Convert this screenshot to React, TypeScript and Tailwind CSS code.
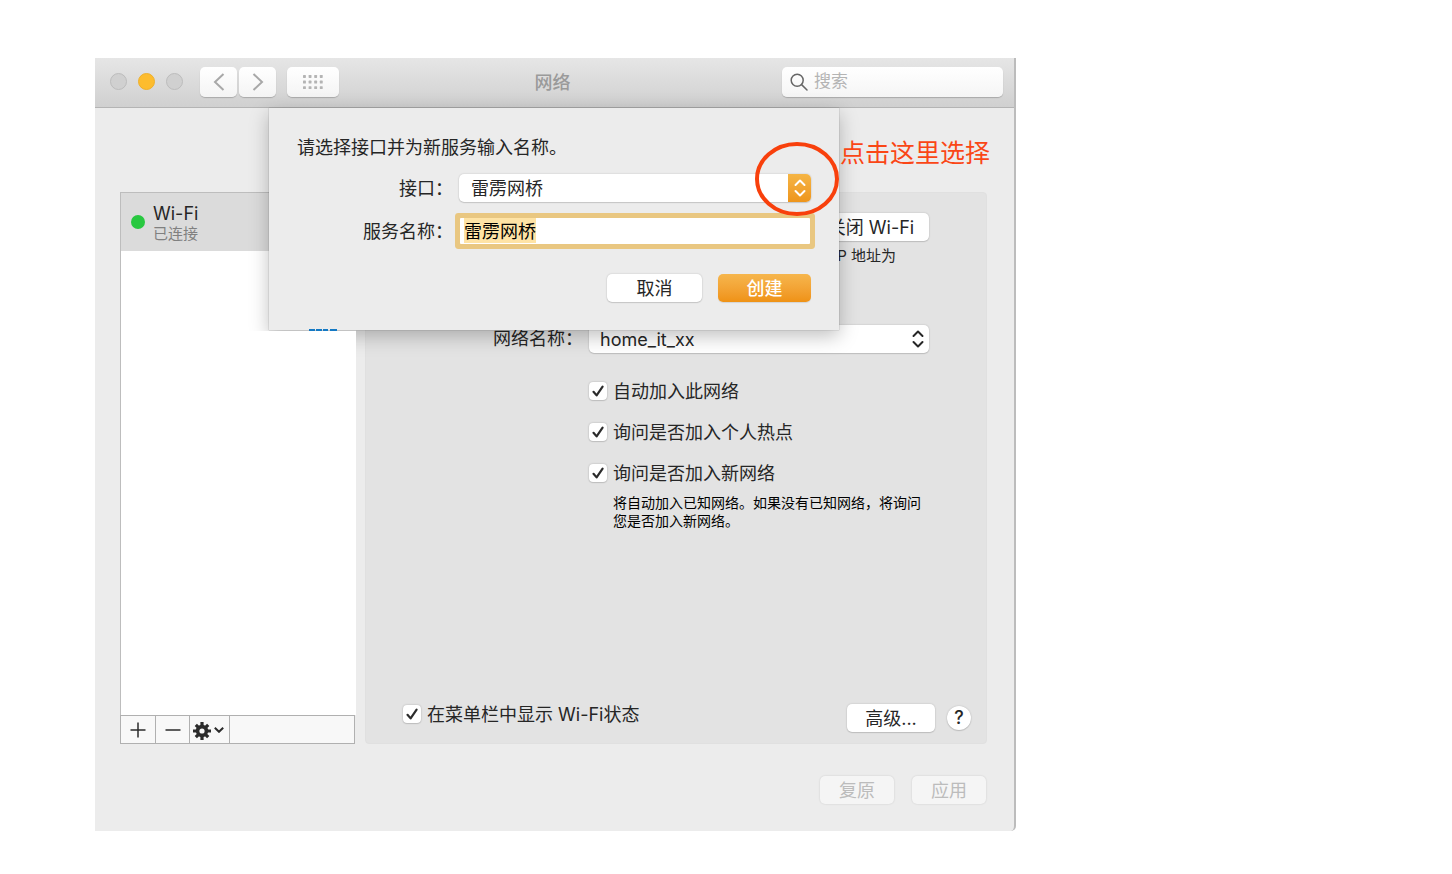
import React, { useEffect, useRef, useState } from 'react';

const ChevronsUpDown: React.FC<{ className?: string }> = ({ className }) => (
  <svg viewBox="0 0 12 18" fill="none" stroke="currentColor" strokeWidth="2" strokeLinecap="round" strokeLinejoin="round" className={className}>
    <path d="M1.5 6 6 1.5 10.5 6M1.5 12 6 16.5 10.5 12" />
  </svg>
);

interface CheckOptionProps {
  label: string;
  className?: string;
}

const CheckOption: React.FC<CheckOptionProps> = ({ label, className = 'h-6' }) => {
  const [checked, setChecked] = useState(true);

  return (
    <label className={`flex items-center gap-1.5 text-[18px] leading-5 ${className}`}>
      <span className="relative block h-[18px] w-[18px] shrink-0">
        <input
          type="checkbox"
          checked={checked}
          onChange={(event) => setChecked(event.target.checked)}
          className="block h-full w-full appearance-none rounded-[4px] bg-white shadow-[0_0_2px_rgba(0,0,0,0.25),0_1px_1px_rgba(0,0,0,0.1)]"
        />
        {checked && (
          <svg viewBox="0 0 18 18" fill="none" stroke="#2b2b2b" strokeWidth="2.2" strokeLinecap="round" strokeLinejoin="round" className="pointer-events-none absolute inset-0">
            <path d="M4.5 9.8 7.6 13.4 13.6 4.6" />
          </svg>
        )}
      </span>
      <span className="pt-0.5">{label}</span>
    </label>
  );
};

const Toolbar: React.FC = () => (
  <header className="flex h-[50px] items-center border-b border-[#b4b4b4] bg-linear-to-b from-[#e6e6e6] to-[#d0d0d0] pr-[11px] pb-0.5 pl-[15px]">
    <div className="flex flex-1 items-center">
      <div className="flex gap-[11px]">
        <span className="h-[17px] w-[17px] rounded-full border border-[#bcbcbc] bg-[#d0d0d0]" />
        <span className="h-[17px] w-[17px] rounded-full border border-[#eeb02c] bg-[#fdbc2e]" />
        <span className="h-[17px] w-[17px] rounded-full border border-[#bcbcbc] bg-[#d0d0d0]" />
      </div>
      <div className="ml-[17px] flex gap-0.5">
        <button type="button" aria-label="后退" className="flex h-[30px] w-[37px] items-center justify-center rounded-[5px] bg-linear-to-b from-white to-[#f4f4f4] shadow-[0_1px_1px_rgba(0,0,0,0.2)]">
          <svg viewBox="0 0 12 18" fill="none" stroke="#a8a8a8" strokeWidth="2" className="h-[18px] w-3">
            <path d="M10.5 1 2 9l8.5 8" />
          </svg>
        </button>
        <button type="button" aria-label="前进" className="flex h-[30px] w-[37px] items-center justify-center rounded-[5px] bg-linear-to-b from-white to-[#f4f4f4] shadow-[0_1px_1px_rgba(0,0,0,0.2)]">
          <svg viewBox="0 0 12 18" fill="none" stroke="#a8a8a8" strokeWidth="2" className="h-[18px] w-3">
            <path d="m1.5 1 8.5 8-8.5 8" />
          </svg>
        </button>
      </div>
      <button type="button" aria-label="全部显示" className="ml-[11px] flex h-[30px] w-[52px] items-center justify-center rounded-[5px] bg-linear-to-b from-white to-[#f4f4f4] shadow-[0_1px_1px_rgba(0,0,0,0.2)]">
        <svg viewBox="0 0 20 14" fill="#b4b4b4" className="h-3.5 w-5">
          {[0, 5.6, 11.2].map((y) =>
            [0, 5.6, 11.2, 16.8].map((x) => <rect key={`${x}-${y}`} x={x} y={y} width="2.9" height="2.9" rx="0.6" />)
          )}
        </svg>
      </button>
    </div>
    <h1 className="pt-0.5 pr-2 text-[18px] font-medium text-[#9a9a9a]">网络</h1>
    <div className="flex flex-1 justify-end">
      <label className="flex h-[30px] w-[221px] items-center gap-1.5 rounded-[5px] bg-linear-to-b from-white to-[#f5f5f5] px-2 shadow-[0_1px_1px_rgba(0,0,0,0.2)]">
        <svg viewBox="0 0 18 18" fill="none" stroke="#666" strokeWidth="1.5" strokeLinecap="round" className="h-[18px] w-[18px] shrink-0">
          <circle cx="7.2" cy="7.2" r="6" />
          <path d="m11.6 11.6 5.4 5.4" />
        </svg>
        <input type="search" aria-label="搜索" placeholder="搜索" className="w-full min-w-0 bg-transparent text-[17px] outline-none placeholder:text-[#b4b4b4]" />
      </label>
    </div>
  </header>
);

const ServiceList: React.FC = () => (
  <aside className="flex w-[236px] shrink-0 flex-col">
    <div className="flex h-[59px] items-center gap-2 border-t border-l border-[#bdbdbd] bg-[#dbdbdb] pl-2.5">
      <span className="h-3.5 w-3.5 rounded-full bg-[#28c840]" />
      <div className="pt-1">
        <p className="text-[18px] leading-5">Wi-Fi</p>
        <p className="text-[15px] leading-5 text-[#808080]">已连接</p>
      </div>
    </div>
    <div className="h-20 border-l border-[#bdbdbd] bg-white" />
    {/* sits above the sheet so its shadow stops here */}
    <div className="relative z-20 flex-1 border-l border-[#bdbdbd] bg-white" />
    <div className="mr-px flex h-[29px] border border-[#b0b0b0] bg-[#f8f8f8] text-[#2b2b2b]">
      <button type="button" aria-label="添加服务" className="flex w-[35px] items-center justify-center border-r border-[#b0b0b0]">
        <svg viewBox="0 0 16 16" stroke="currentColor" strokeWidth="1.5" className="h-4 w-4">
          <path d="M8 0.5v15M0.5 8h15" />
        </svg>
      </button>
      <button type="button" aria-label="移除服务" className="flex w-[34px] items-center justify-center border-r border-[#b0b0b0]">
        <svg viewBox="0 0 16 16" stroke="currentColor" strokeWidth="1.5" className="h-4 w-4">
          <path d="M0.5 8h15" />
        </svg>
      </button>
      <button type="button" aria-label="更多操作" className="flex w-10 items-center justify-center gap-[3px] border-r border-[#b0b0b0] pr-0.5">
        <svg viewBox="0 0 18 18" className="mt-0.5 h-[18px] w-[18px]">
          <g stroke="currentColor" strokeWidth="3.2">
            <path d="M9 0v18M0 9h18M2.8 2.8l12.4 12.4M15.2 2.8 2.8 15.2" />
          </g>
          <circle cx="9" cy="9" r="6.2" fill="currentColor" />
          <circle cx="9" cy="9" r="2.6" fill="#f8f8f8" />
        </svg>
        <svg viewBox="0 0 10 6" fill="none" stroke="currentColor" strokeWidth="2" className="h-1.5 w-2.5">
          <path d="m0.8 0.8 4.2 4 4.2-4" />
        </svg>
      </button>
    </div>
  </aside>
);

const WifiPanel: React.FC = () => (
  <section className="flex flex-1 flex-col rounded-[4px] border border-[#e0e0e0] bg-[#e3e3e3] pb-[11px]">
    <div className="flex flex-col items-end pt-5 pr-[57px]">
      <button type="button" className="h-7 w-[116px] rounded-[5px] bg-white pt-0.5 text-[18px] leading-6 shadow-[0_0_2px_rgba(0,0,0,0.2),0_1px_1px_rgba(0,0,0,0.12)]">
        关闭 Wi-Fi
      </button>
      <p className="mt-[5px] mr-[33px] text-[15px] leading-5">IP 地址为</p>
    </div>

    <div className="mt-[59px] flex h-7 items-center justify-end gap-1.5 pr-[57px]">
      <label htmlFor="network-name" className="text-[18px] leading-6">网络名称：</label>
      <div className="relative w-[340px]">
        <select id="network-name" className="block h-7 w-full appearance-none rounded-[5px] bg-white pl-[11px] text-[18px] shadow-[0_0_2px_rgba(0,0,0,0.2),0_1px_1px_rgba(0,0,0,0.12)]">
          <option>home_it_xx</option>
        </select>
        <ChevronsUpDown className="pointer-events-none absolute top-[5px] right-[5px] h-[18px] w-3" />
      </div>
    </div>

    <div className="mt-[26px] mr-[57px] flex w-[340px] flex-col gap-[17px] self-end">
      <CheckOption label="自动加入此网络" />
      <CheckOption label="询问是否加入个人热点" />
      <CheckOption label="询问是否加入新网络" />
    </div>
    <p className="mt-[9px] mr-[57px] w-[340px] self-end pl-6 text-[14px] leading-[18px] text-black">
      将自动加入已知网络。如果没有已知网络，将询问您是否加入新网络。
    </p>

    <div className="mt-auto flex items-start justify-between pr-[15px] pl-[37px]">
      <CheckOption label="在菜单栏中显示 Wi-Fi状态" className="h-5" />
      <div className="flex items-center gap-3">
        <button type="button" className="h-7 w-[88px] rounded-[5px] bg-white pt-0.5 text-[18px] leading-6 shadow-[0_0_2px_rgba(0,0,0,0.2),0_1px_1px_rgba(0,0,0,0.12)]">
          高级...
        </button>
        <button type="button" aria-label="帮助" className="h-6 w-6 rounded-full bg-white text-[18px] leading-6 font-medium shadow-[0_0_2px_rgba(0,0,0,0.2),0_1px_1px_rgba(0,0,0,0.12)]">
          ?
        </button>
      </div>
    </div>
  </section>
);

const NewServiceSheet: React.FC = () => {
  const [name, setName] = useState('雷雳网桥');
  const nameRef = useRef<HTMLInputElement>(null);

  useEffect(() => {
    nameRef.current?.focus();
    nameRef.current?.select();
  }, []);

  return (
    <form
      onSubmit={(event) => event.preventDefault()}
      className="absolute top-0 left-[174px] z-10 w-[570px] bg-[#ececec] px-7 py-7 text-[18px] leading-6 shadow-[0_0_1px_rgba(0,0,0,0.4),0_6px_18px_rgba(0,0,0,0.25)]"
    >
      <p>请选择接口并为新服务输入名称。</p>

      <div className="mt-3.5 flex items-center justify-end gap-1.5">
        <label htmlFor="interface" className="pt-0.5">接口：</label>
        <div className="relative w-[352px]">
          <select id="interface" className="block h-7 w-full appearance-none rounded-[5px] bg-white pt-0.5 pl-3 shadow-[0_0_2px_rgba(0,0,0,0.2),0_1px_1px_rgba(0,0,0,0.12)]">
            <option>雷雳网桥</option>
          </select>
          <span className="pointer-events-none absolute inset-y-0 right-0 flex w-[23px] items-center justify-center rounded-r-[5px] bg-linear-to-b from-[#f5b544] to-[#ee951a] text-white">
            <ChevronsUpDown className="h-[18px] w-3" />
          </span>
        </div>
      </div>

      <div className="mt-4 flex items-center justify-end gap-[7px] pr-px">
        <label htmlFor="service-name" className="pt-0.5">服务名称：</label>
        <input
          id="service-name"
          ref={nameRef}
          type="text"
          value={name}
          onChange={(event) => setName(event.target.value)}
          className="h-[26px] w-[350px] rounded-[1px] bg-white px-1 pb-0.5 leading-[22px] text-black ring-5 ring-[#e9c781] outline-none selection:bg-[#fee3a5] selection:text-black"
        />
      </div>

      <div className="mt-[30px] flex justify-end gap-4">
        <button type="button" className="h-7 w-[95px] rounded-[5px] bg-white pt-0.5 shadow-[0_0_2px_rgba(0,0,0,0.2),0_1px_1px_rgba(0,0,0,0.12)]">
          取消
        </button>
        <button type="submit" className="h-7 w-[93px] rounded-[5px] bg-linear-to-b from-[#f6b64c] to-[#ef9214] pt-0.5 font-medium text-white shadow-[0_1px_1px_rgba(0,0,0,0.1)]">
          创建
        </button>
      </div>

      <svg viewBox="0 0 28 2" className="absolute -bottom-px left-10 h-0.5 w-7">
        <path d="M0 1h6M7 1h6M14 1h5M21 1h7" stroke="#1479c4" strokeWidth="2" />
      </svg>

      <svg viewBox="0 0 84 74" fill="none" className="pointer-events-none absolute top-[34px] left-[486px] h-[74px] w-[84px]">
        <ellipse cx="42" cy="37" rx="40" ry="35" stroke="#f8400c" strokeWidth="4" />
      </svg>
      <p className="absolute top-7 left-[571px] text-[25px] leading-[34px] whitespace-nowrap text-[#fa4616]">点击这里选择</p>
    </form>
  );
};

const App: React.FC = () => {
  return (
    <div className="min-h-screen bg-white pt-[58px] pb-[43px] pl-[95px] font-['Inter','Noto_Sans_CJK_SC',sans-serif] text-[#262626]">
      <main className="w-full max-w-[921px] rounded-br-[5px] border-r-2 border-[#bcbcbc] bg-[#ececec]">
        <Toolbar />
        <div className="relative">
          <div className="flex min-h-[636px] gap-[9px] pt-[84px] pr-[27px] pl-[25px]">
            <ServiceList />
            <WifiPanel />
          </div>
          <div className="flex justify-end gap-[18px] pt-8 pr-7 pb-[27px]">
            <button type="button" disabled className="h-7 w-[74px] rounded-[5px] bg-[#f5f5f5] pt-0.5 text-[18px] leading-6 text-[#bcbcbc] shadow-[0_0_2px_rgba(0,0,0,0.15)]">
              复原
            </button>
            <button type="button" disabled className="h-7 w-[74px] rounded-[5px] bg-[#f5f5f5] pt-0.5 text-[18px] leading-6 text-[#bcbcbc] shadow-[0_0_2px_rgba(0,0,0,0.15)]">
              应用
            </button>
          </div>
          <NewServiceSheet />
        </div>
      </main>
    </div>
  );
};

export default App;
